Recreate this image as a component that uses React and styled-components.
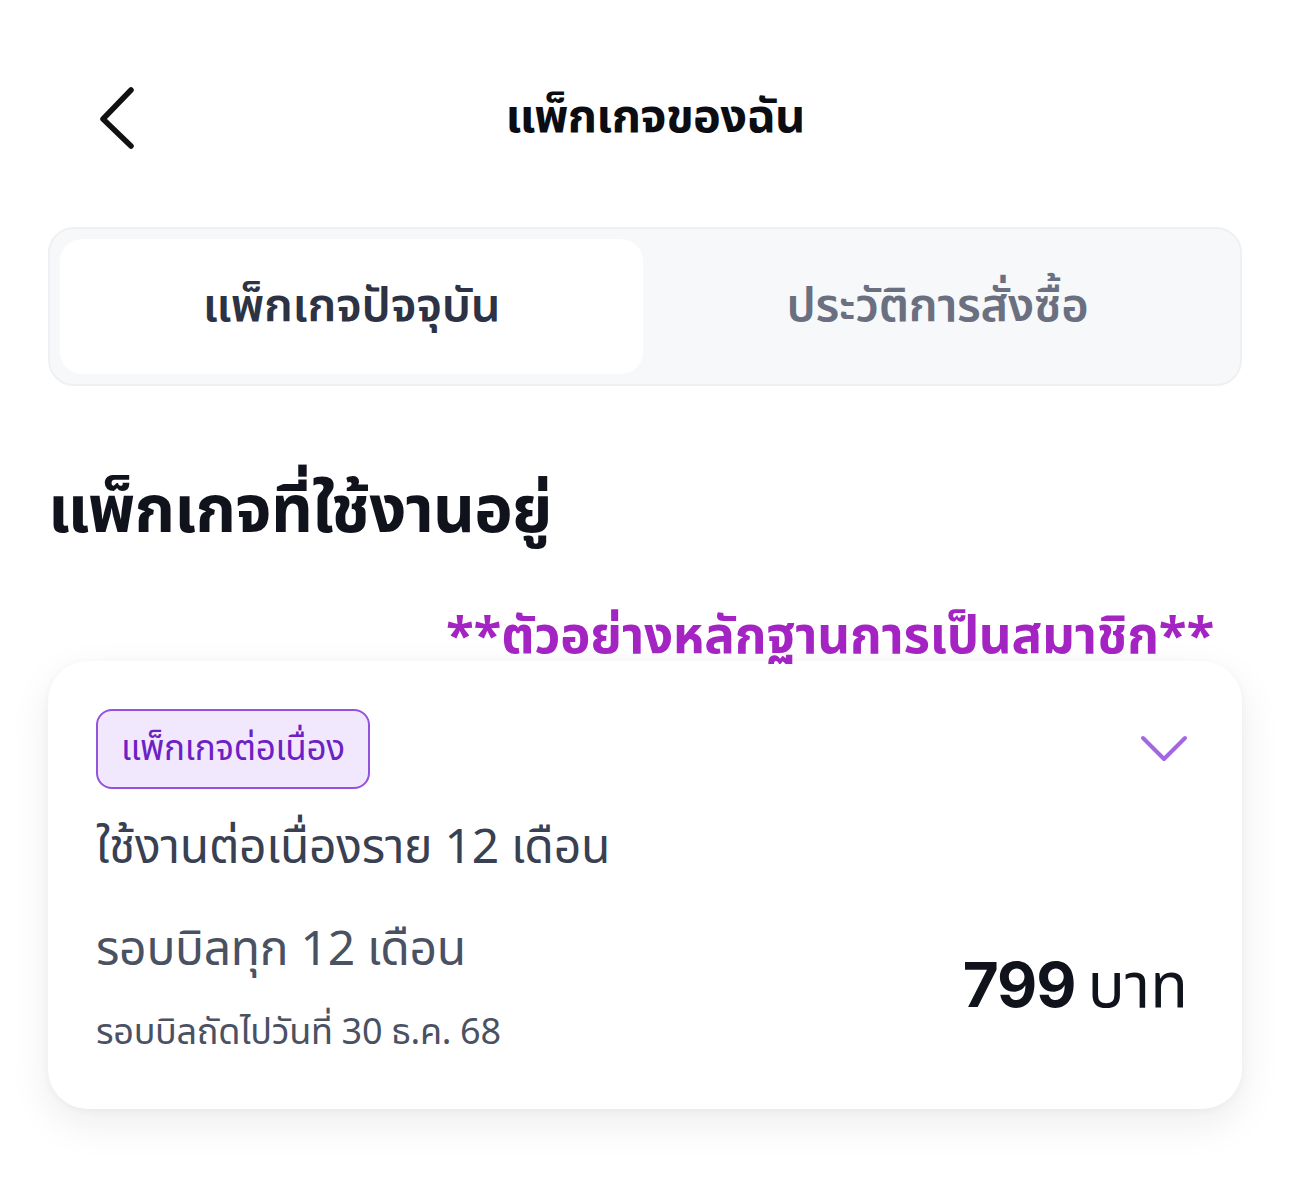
import React from "react";
import styled, { createGlobalStyle } from "styled-components";

const Global = createGlobalStyle`
  html, body { margin: 0; padding: 0; background: #ffffff; }
  body { font-family: "Noto Sans Thai", "Noto Sans", sans-serif; }
  * { box-sizing: border-box; }
`;

const Page = styled.div`
  width: 1290px;
  min-height: 1195px;
  background: #fff;
  padding: 0 48px;
  display: flex;
  flex-direction: column;
`;

const Header = styled.header`
  height: 227px;
  display: grid;
  grid-template-columns: 140px 1fr 120px;
  align-items: start;
  padding-top: 86px;
`;

const BackBtn = styled.button`
  border: 0;
  background: none;
  padding: 0 0 0 50px;
  height: 64px;
  display: flex;
  align-items: center;
  cursor: pointer;
`;

const Title = styled.h1`
  margin: 0;
  text-align: center;
  font-size: 47px;
  font-weight: 700;
  color: #0b0d12;
  line-height: 64px;
  letter-spacing: -0.7px;
`;

const Tabs = styled.div`
  height: 159px;
  background: #f7f8fa;
  border: 2px solid #eef0f3;
  border-radius: 26px;
  padding: 10px;
  display: grid;
  grid-template-columns: 1fr 1fr;
`;

const Tab = styled.div`
  border-radius: 22px;
  background: ${p => (p.$active ? "#ffffff" : "transparent")};
  display: flex;
  align-items: center;
  justify-content: center;
  font-size: 47px;
  font-weight: 600;
  letter-spacing: -0.3px;
  color: ${p => (p.$active ? "#2d3344" : "#6b7081")};
  margin-right: ${p => (p.$active ? "2px" : "0")};
`;

const Heading = styled.h2`
  margin: 81px 0 0 0;
  font-size: 65px;
  font-weight: 700;
  color: #10131b;
  line-height: 90px;
  letter-spacing: -0.8px;
`;

const Watermark = styled.div`
  position: relative;
  z-index: 1;
  margin-top: 58px;
  align-self: flex-end;
  padding-right: 28px;
  font-size: 51px;
  font-weight: 700;
  color: #a324c2;
  line-height: 46px;
  height: 46px;
  letter-spacing: -0.2px;
`;

const Card = styled.section`
  background: #fff;
  border-radius: 40px;
  box-shadow: 0 14px 40px rgba(20, 24, 40, 0.08), 0 2px 8px rgba(20, 24, 40, 0.04);
  padding: 48px 54px 54px 48px;
  display: flex;
  flex-direction: column;
`;

const CardTop = styled.div`
  display: flex;
  justify-content: space-between;
  align-items: center;
`;

const Badge = styled.span`
  display: inline-flex;
  align-items: center;
  height: 80px;
  padding: 0 23px;
  background: #f2e8fd;
  border: 2px solid #9552dc;
  border-radius: 16px;
  color: #6c21c4;
  font-size: 35px;
  font-weight: 400;
  letter-spacing: -0.3px;
`;

const Chevron = styled.span`
  display: flex;
  align-items: center;
`;

const PlanName = styled.div`
  margin-top: 30px;
  font-size: 48px;
  color: #384052;
  line-height: 60px;
  letter-spacing: -0.3px;
`;

const BillRow = styled.div`
  margin-top: 42px;
  display: flex;
  justify-content: space-between;
  align-items: center;
`;

const BillInfo = styled.div`
  display: flex;
  flex-direction: column;
`;

const BillCycle = styled.div`
  font-size: 48px;
  color: #4a5163;
  line-height: 60px;
  letter-spacing: -0.3px;
`;

const NextBill = styled.div`
  margin-top: 30px;
  font-size: 36px;
  color: #4a5163;
  line-height: 44px;
  letter-spacing: -0.3px;
`;

const Price = styled.div`
  display: flex;
  align-items: baseline;
  gap: 12px;
  color: #10131b;
`;

const Amount = styled.span`
  font-family: Inter, "Noto Sans", sans-serif;
  font-size: 62px;
  font-weight: 700;
  letter-spacing: -1px;
`;

const Currency = styled.span`
  font-size: 62px;
  font-weight: 400;
`;

export default function App() {
  return (
    <>
      <Global />
      <Page>
        <Header>
          <BackBtn aria-label="back">
            <svg width="40" height="64" viewBox="0 0 40 64" fill="none">
              <path d="M33 4 L5 33 L33 60" stroke="#111" strokeWidth="5.5" strokeLinecap="round" strokeLinejoin="round" />
            </svg>
          </BackBtn>
          <Title>แพ็กเกจของฉัน</Title>
          <div />
        </Header>
        <Tabs>
          <Tab $active>แพ็กเกจปัจจุบัน</Tab>
          <Tab>ประวัติการสั่งซื้อ</Tab>
        </Tabs>
        <Heading>แพ็กเกจที่ใช้งานอยู่</Heading>
        <Watermark>**ตัวอย่างหลักฐานการเป็นสมาชิก**</Watermark>
        <Card>
          <CardTop>
            <Badge>แพ็กเกจต่อเนื่อง</Badge>
            <Chevron>
              <svg width="48" height="30" viewBox="0 0 48 30" fill="none">
                <path d="M3 4 L24 25 L45 4" stroke="#a467e3" strokeWidth="4" strokeLinecap="round" strokeLinejoin="round" />
              </svg>
            </Chevron>
          </CardTop>
          <PlanName>ใช้งานต่อเนื่องราย 12 เดือน</PlanName>
          <BillRow>
            <BillInfo>
              <BillCycle>รอบบิลทุก 12 เดือน</BillCycle>
              <NextBill>รอบบิลถัดไปวันที่ 30 ธ.ค. 68</NextBill>
            </BillInfo>
            <Price>
              <Amount>799</Amount>
              <Currency>บาท</Currency>
            </Price>
          </BillRow>
        </Card>
      </Page>
    </>
  );
}
